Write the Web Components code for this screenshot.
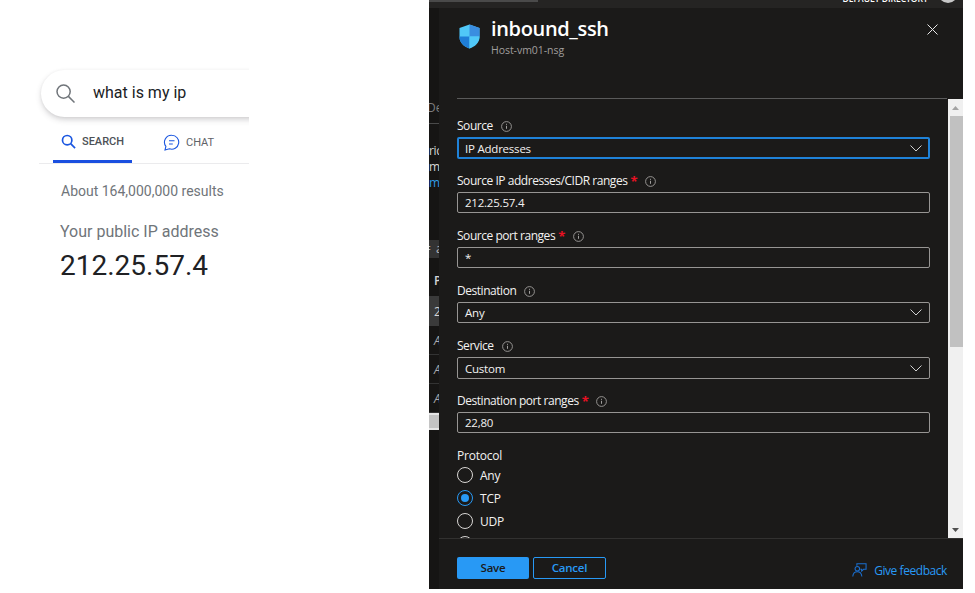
<!DOCTYPE html>
<html><head><meta charset="utf-8"><title>inbound_ssh</title>
<style>html,body{margin:0;padding:0;background:#fff;overflow:hidden}body{width:975px;height:593px}</style>
</head><body>
<app-shell></app-shell>
<template id="t-shell"><style>
:host{display:flex;width:975px;height:593px;align-items:flex-start;background:#fff}
.dark{width:534px;height:589px;display:flex;flex-direction:column;background:#1b1a19;flex:none}
.body{flex:1;display:flex;min-height:0}
</style>
<search-pane></search-pane>
<div class="dark"><top-bar></top-bar><div class="body"><under-strip></under-strip><rule-blade></rule-blade></div></div>
</template>

<template id="t-search"><style>
:host{display:block;width:429px;height:589px;flex:none;font-family:Roboto,sans-serif;box-sizing:border-box;padding:0 180px 0 0}
.clip{width:249px;height:100%;overflow:hidden;box-sizing:border-box;padding:70px 0 0 39px}
.box{width:260px;height:47px;margin-left:2px;border-radius:24px 0 0 24px;background:#fff;box-shadow:0 3px 6px -1px rgba(64,60,67,.28),0 0 3px rgba(64,60,67,.05);display:flex;align-items:center;padding-left:15px;box-sizing:border-box;gap:18px;font-size:16px;color:#202124}
.box span{margin-top:-3px}
.tabs{display:flex;height:47px;border-bottom:1px solid #ebebed;box-sizing:border-box;padding-left:14px;width:210px}
.tab{display:flex;align-items:center;gap:6px;font-size:11px;color:#5f6368;box-sizing:border-box;height:46px;padding-top:5px}
.tab.on{width:79px;font-weight:500;color:#4d5156;border-bottom:3px solid #1a4fe0;padding-left:8px}
.tab.chat{margin-left:31px;gap:6px;padding-top:4px}
.count{font-size:14px;color:#70757a;margin:19px 0 0 22px;line-height:16px}
.lab{font-size:16px;color:#70757a;margin:23px 0 0 21px;line-height:20px}
.ip{font-size:28px;color:#202124;margin:6px 0 0 21px;line-height:36px}
</style><div class="clip">
<div class="box"><svg width="19" height="19" viewBox="0 0 19 19" fill="none" stroke="#70757a" stroke-width="1.5"><circle cx="7.600" cy="7.600" r="6.600"/><path d="M12.400 12.400 18.500 18.500"/></svg><span>what is my ip</span></div>
<div class="tabs">
<div class="tab on"><svg width="15" height="15" viewBox="0 0 16 16" fill="none" stroke="#1a56e0" stroke-width="1.800"><circle cx="6.600" cy="6.600" r="5"/><path d="M10.300 10.300 15 15"/></svg><span>SEARCH</span></div>
<div class="tab chat"><svg width="17" height="17" viewBox="0 0 17 17" fill="none" stroke="#1a56e0" stroke-width="1.100"><path d="M8.800 1.200a7 7 0 1 1-2.400 13.600L2 16l.9-3.600A7 7 0 0 1 8.800 1.200Z"/><path d="M6 6.700h5.500M6 10h3.800"/></svg><span>CHAT</span></div>
</div>
<div class="count">About 164,000,000 results</div>
<div class="lab">Your public IP address</div>
<div class="ip">212.25.57.4</div>
</div></template>

<template id="t-top"><style>
:host{display:flex;height:8px;flex:none;background:#252423;overflow:hidden;align-items:flex-end;justify-content:flex-end;position:relative;font:600 8.500px/12px "Open Sans",sans-serif;color:#fff}
.seg{position:absolute;left:0;top:0;width:109px;height:2px;background:#4a4a4a}
.txt{margin-bottom:3px;white-space:nowrap}
.av{width:20px;height:20px;border-radius:50%;background:#c8c8c8;margin:0 5px 5px 10px;flex:none}
</style><div class="seg"></div><span class="txt">DEFAULT DIRECTORY</span><span class="av"></span></template>

<template id="t-strip"><style>
:host{display:block;width:10px;flex:none;background:#161514;overflow:hidden;font:12px/16px "Open Sans",sans-serif;color:#d6d6d6;position:relative}
.in{width:60px;padding-top:92px}
.de{color:#7d7d7d;margin-left:-2px;height:16px}
.hr{height:1px;background:#4a4a4a;margin-top:7px;width:10px}
.t{display:block;height:16px;margin-left:0}
.l{color:#2f9be8;height:16px}
.boxr{height:18px;background:#333;margin-top:49px;color:#bbb;line-height:18px;white-space:nowrap;padding-left:0;text-indent:-5px;letter-spacing:1px}
.p{height:38px;line-height:46px;font-weight:600;margin-left:5px}
.r2{height:30px;background:#3a3a3a;line-height:32px;padding-left:5px}
.r{height:28px;line-height:30px;border-bottom:1px solid #333;padding-left:5px;color:#aaa;font-style:italic;width:5px}
.bar{height:17px;background:#c4c4c4;border-top:2px solid #e6e6e6;border-bottom:2px solid #e6e6e6;box-sizing:border-box}
</style><div class="in">
<div class="de">De</div><div class="hr"></div>
<div style="height:19px"></div>
<span class="t" style="letter-spacing:-.4px">ric</span><span class="t">m</span><div class="l">m</div>
<div class="boxr">= a</div>
<div class="p">P</div>
<div class="r2">2</div>
<div class="r">A</div><div class="r">A</div><div class="r">A</div>
<div class="bar"></div>
</div></template>

<template id="t-blade"><style>
:host{display:flex;flex-direction:column;flex:1;min-width:0;background:#1b1a19;font-family:"Open Sans",sans-serif;color:#fff;height:581px}
.head{height:90px;flex:none;display:flex;box-sizing:border-box;padding:0 0 0 18px;position:relative}
.shield{margin:16px 11px 0 2px;flex:none}
h1{font:600 20px/26px "Open Sans",sans-serif;margin:8px 0 0;letter-spacing:-.35px}
.sub{font-size:10.500px;line-height:14px;color:#a19f9d;letter-spacing:-.05px;margin-top:1px}
.x{position:absolute;top:16px;right:25px}
.hl{height:1px;background:#5a5a5a;flex:none;margin:0 16px 0 18px}
.mid{flex:1;min-height:0;display:flex;overflow:hidden}
.form{flex:1;min-width:0;padding:19px 18px 0 18px;box-sizing:border-box;display:flex;flex-direction:column;gap:15px}
.proto{display:flex;flex-direction:column;font-size:12px;letter-spacing:-.22px;line-height:16px;color:#f3f2f1}
.proto .t{margin-bottom:3px}
.radios{display:flex;flex-direction:column;gap:7px}
.foot{height:51px;flex:none;border-top:1px solid #323130;display:flex;align-items:flex-start;box-sizing:border-box;padding:18px 16px 0 18px}
.save,.cancel{height:22px;box-sizing:border-box;border-radius:2px;font-size:11.500px;font-weight:600;letter-spacing:-.2px;display:flex;align-items:center;justify-content:center;padding-bottom:2px}
.save{width:72px;background:#2899f5;color:#1b1a19}
.cancel{width:73px;border:1px solid #2899f5;color:#2899f5;margin-left:4px;padding-bottom:1px}
.fb{margin-left:auto;display:flex;align-items:center;gap:7px;color:#2899f5;font-size:12px;letter-spacing:-.44px;line-height:16px;margin-top:6px}
.fb svg{margin-top:-3px}
</style>
<div class="head">
<svg class="shield" width="21" height="25" viewBox="0 0 22 25" preserveAspectRatio="none"><path d="M11 .5 21.500 4v9c0 6-5 9.700-10.500 11.500C5.500 22.700.5 19 .5 13V4Z" fill="#50c8f8"/><path d="M11 .5 21.500 4v8.500H11Z" fill="#3a8de0"/><path d="M.5 12.500H11v12C5.500 22.700.5 19 .5 13Z" fill="#1f7ed8"/><path d="M11 12.500h10.500c-.3 5.500-5 8.700-10.500 12Z" fill="#50c8f8"/></svg>
<div><h1>inbound_ssh</h1><div class="sub">Host-vm01-nsg</div></div>
<svg class="x" width="11" height="11" viewBox="0 0 11 11" stroke="#e8e8e8" stroke-width="1" fill="none"><path d="M.5.5l10 10M10.500.5l-10 10"/></svg>
</div>
<div class="hl"></div>
<div class="mid">
<div class="form">
<form-field label="Source" type="select" value="IP Addresses" focused></form-field>
<form-field label="Source IP addresses/CIDR ranges" required value="212.25.57.4"></form-field>
<form-field label="Source port ranges" required value="*"></form-field>
<form-field label="Destination" type="select" value="Any"></form-field>
<form-field label="Service" type="select" value="Custom" tall></form-field>
<form-field label="Destination port ranges" required value="22,80"></form-field>
<div class="proto"><div class="t">Protocol</div><div class="radios"><radio-option>Any</radio-option><radio-option checked>TCP</radio-option><radio-option>UDP</radio-option><radio-option></radio-option></div></div>
</div>
<scroll-bar></scroll-bar>
</div>
<div class="foot"><div class="save">Save</div><div class="cancel">Cancel</div>
<div class="fb"><svg width="15" height="14" viewBox="0 0 17 16" fill="none" stroke="#1a6fd0" stroke-width="1.200"><path d="M5.500 3V.8h10.500v6.400h-3l-2 2-.2-2H9.500"/><circle cx="6" cy="6.500" r="2.600"/><path d="M.8 15.500c.3-3.500 2-5.500 5.200-5.500s4.900 2 5.200 5.500"/></svg><span>Give feedback</span></div></div>
</template>

<template id="t-field"><style>
:host{display:block;font-size:12px;line-height:16px;color:#f3f2f1;letter-spacing:-.22px}
.lab{display:flex;align-items:center;height:16px;margin-bottom:3px;white-space:nowrap;letter-spacing:-.46px}
.req{color:#e81123;font-weight:700;margin-left:3px;font-size:13px;line-height:14px}
.i{margin-left:7px;flex:none}
.req+.i{margin-left:8px}
.box{height:21px;box-sizing:border-box;border:1px solid #979593;border-radius:2px;padding:0 7px;display:flex;align-items:center;justify-content:space-between;background:#1b1a19;color:#f3f2f1;font-size:11.500px}
.v{position:relative;padding-top:1px}
:host([tall]) .box,:host([focused]) .box{height:22px;margin-bottom:-1px}
:host([focused]) .box{border:2px solid #1f82d8;padding:0 6px}
svg.ch{flex:none;display:none}
:host([type="select"]) svg.ch{display:block}
.req[hidden]{display:none}
</style><div class="lab"><span class="tx"></span><span class="req" hidden>*</span><svg class="i" width="11" height="11" viewBox="0 0 11 11" fill="none" stroke="#a19f9d"><circle cx="5.500" cy="5.500" r="4.900" stroke-width=".9"/><path d="M5.500 4.800v3M5.500 2.800v1" stroke-width="1"/></svg></div>
<div class="box"><span class="v"></span><svg class="ch" width="12" height="7" viewBox="0 0 12 7" fill="none" stroke="#d0d0d0" stroke-width="1"><path d="M.5.500 6 6 11.500.500"/></svg></div></template>

<template id="t-radio"><style>
:host{display:flex;align-items:center;gap:7px;height:16px;font-size:12px;letter-spacing:-.22px;color:#f3f2f1}
.c{width:16px;height:16px;border-radius:50%;border:1.500px solid #d8d6d4;box-sizing:border-box;display:flex;align-items:center;justify-content:center;flex:none}
.s{padding-top:2px;line-height:16px}
:host([checked]) .c{border-color:#2899f5}
:host([checked]) .c::after{content:"";width:8px;height:8px;border-radius:50%;background:#2899f5}
</style><span class="c"></span><span class="s"><slot></slot></span></template>

<template id="t-scroll"><style>
:host{display:flex;flex-direction:column;width:15px;flex:none;background:#f0f0f0;box-sizing:border-box;align-items:flex-end}
.btn{width:15px;height:17px;flex:none;display:flex;align-items:center;justify-content:center}
.thumb{width:13px;height:231px;background:#c1c1c1;flex:none}
.sp{flex:1}
</style><div class="btn"><svg width="7" height="4" viewBox="0 0 7 4"><path d="M3.500 0 7 4H0Z" fill="#a3a3a3"/></svg></div><div class="thumb"></div><div class="sp"></div><div class="btn"><svg width="7" height="4" viewBox="0 0 7 4"><path d="M0 0h7L3.500 4Z" fill="#505050"/></svg></div></template>

<script>
function def(name,id,init){customElements.define(name,class extends HTMLElement{constructor(){super();this.attachShadow({mode:'open'}).appendChild(document.getElementById(id).content.cloneNode(true));}connectedCallback(){if(init)init(this,this.shadowRoot)}})}
def('form-field','t-field',(h,s)=>{s.querySelector('.tx').textContent=h.getAttribute('label');s.querySelector('.v').textContent=h.getAttribute('value');if(h.hasAttribute('required'))s.querySelector('.req').hidden=false});
def('radio-option','t-radio');def('scroll-bar','t-scroll');def('rule-blade','t-blade');def('under-strip','t-strip');def('top-bar','t-top');def('search-pane','t-search');def('app-shell','t-shell');
</script>
</body></html>
